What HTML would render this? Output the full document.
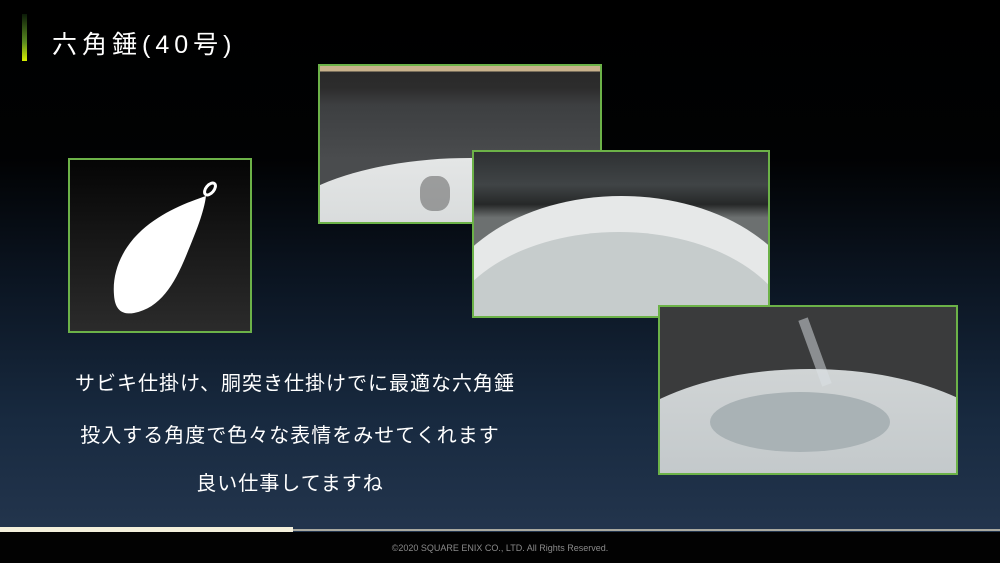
<!DOCTYPE html>
<html><head><meta charset="utf-8"><style>
*{margin:0;padding:0;box-sizing:border-box}
body{width:1000px;height:563px;overflow:hidden;position:relative;font-family:"Liberation Sans","Noto Sans CJK JP",sans-serif;
background:linear-gradient(180deg,#000 0%,#010203 28%,#0b1522 50%,#182a40 75%,#22344c 93%);}
.abs{position:absolute}
.ph{position:absolute;border:2px solid #6cb248;overflow:hidden}
.txt{position:absolute;color:#fff;font-size:20px;letter-spacing:1px;white-space:nowrap;transform:translateX(-50%)}
</style></head><body>
<div class="abs" style="left:22px;top:14px;width:5px;height:47px;background:linear-gradient(#0b1a08,#5a8a20 60%,#d8f000)"></div>
<div class="abs" style="left:52px;top:25px;color:#fff;font-size:25px;letter-spacing:5px">六角錘(40号)</div>

<div class="abs" style="left:68px;top:158px;width:184px;height:175px;border:2px solid #6cb248;background:linear-gradient(#050505,#2b2b2b)">
<svg width="180" height="171" viewBox="0 0 180 171" style="position:absolute;left:0;top:0">
<ellipse cx="140" cy="29" rx="7" ry="4" transform="rotate(-50 140 29)" fill="none" stroke="#fff" stroke-width="3"/>
<path d="M136 36 C 118 42 92 52 72 70 C 52 88 42 112 44 135 C 45 150 52 155 64 153 C 90 148 104 125 116 96 C 126 72 134 52 136 36 Z" fill="#fff"/>
</svg></div>

<div class="ph" style="left:318px;top:64px;width:284px;height:160px;background:linear-gradient(#c8b28c 0,#c8b28c 5px,#2a2a2a 6px,#2c2c2c 14%,#3d3f41 25%,#4a4c4e 60%)">
<div class="abs" style="left:-60px;top:92px;width:420px;height:180px;border-radius:50%;background:linear-gradient(#e4e6e6,#c6cacb)"></div>
<div class="abs" style="left:100px;top:110px;width:30px;height:35px;background:#555;border-radius:40%;opacity:.5"></div>
</div>
<div class="ph" style="left:472px;top:150px;width:298px;height:168px;background:linear-gradient(#2e3133 0,#404446 20%,#262828 32%,#6c7070 40%)">
<div class="abs" style="left:-40px;top:44px;width:375px;height:260px;border-radius:50%;background:#e6e8e8"></div>
<div class="abs" style="left:-30px;top:80px;width:350px;height:220px;border-radius:50%;background:#c6cccc"></div>
</div>
<div class="ph" style="left:658px;top:305px;width:300px;height:170px;background:#3a3b3c">
<div class="abs" style="left:-60px;top:62px;width:420px;height:200px;border-radius:50%;background:linear-gradient(#d0d4d5,#b8bfc2)"></div>
<div class="abs" style="left:50px;top:85px;width:180px;height:60px;border-radius:50%;background:#a9b2b5"></div>
<div class="abs" style="left:150px;top:10px;width:10px;height:70px;background:rgba(220,225,230,.5);transform:rotate(-20deg)"></div>
</div>

<div class="txt" style="left:295px;top:367px">サビキ仕掛け、胴突き仕掛けでに最適な六角錘</div>
<div class="txt" style="left:290px;top:419px">投入する角度で色々な表情をみせてくれます</div>
<div class="txt" style="left:290px;top:467px">良い仕事してますね</div>

<div class="abs" style="left:0;top:529px;width:1000px;height:2px;background:#a9a9a0"></div>
<div class="abs" style="left:0;top:527px;width:293px;height:5px;background:#f4f0dc"></div>
<div class="abs" style="left:0;top:532px;width:1000px;height:31px;background:#020202"></div>
<div class="abs" style="left:0;top:543px;width:1000px;text-align:center;color:#8a8a8a;font-size:9px">©2020 SQUARE ENIX CO., LTD. All Rights Reserved.</div>
</body></html>
